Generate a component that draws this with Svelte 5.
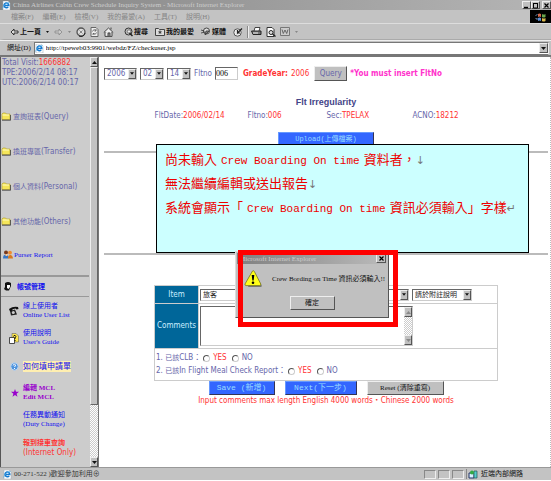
<script>
  const menus = ['檔案(F)', '編輯(E)', '檢視(V)', '我的最愛(A)', '工具(T)', '說明(H)'];
  const folders = [
    ['查詢班表', '(Query)'],
    ['換班專區', '(Transfer)'],
    ['個人資料', '(Personal)'],
    ['其他功能', '(Others)'],
  ];
  const dates = [
    { label: 'Year', value: '2006', size: 'y' },
    { label: 'Month', value: '02', size: 'm' },
    { label: 'Day', value: '14', size: 'm' },
  ];
  const info = [
    ['FltDate:', '2006/02/14'],
    ['Fltno:', '006'],
    ['Sec:', 'TPELAX'],
    ['ACNO:', '18212'],
  ];
</script>

{#snippet arrow(up = false)}
  <svg width="5" height="3" viewBox="0 0 5 3" aria-hidden="true"><path d={up ? 'M0 3L2.5 0L5 3z' : 'M0 0L2.5 3L5 0z'} fill="currentColor" /></svg>
{/snippet}

{#snippet ie(s = 9)}
  <svg width={s} height={s} viewBox="0 0 9 9" aria-hidden="true">
    <path d="M1 0h5l2 2v7H1z" fill="#fff" stroke="#9ab" stroke-width=".5" />
    <path d="M6.2 6A2.4 2.4 0 1 1 6.8 4.6H2.2" fill="none" stroke="#1479cf" stroke-width="1.5" />
    <path d="M.6 7.5Q2 2.5 7.5 1.4" fill="none" stroke="#55b0ea" stroke-width=".8" />
  </svg>
{/snippet}

<div class="app">
  <header>
    <div class="title">
      {@render ie(9)}
      <span class="grow">China Airlines Cabin Crew Schedule Inquiry System - Microsoft Internet Explorer</span>
      <button class="cap" aria-label="Minimize"><svg width="7" height="7"><path d="M1 5.5h4" stroke="#000" stroke-width="1.4" /></svg></button>
      <button class="cap" aria-label="Maximize"><svg width="7" height="7"><path d="M1 1.5h5M1.5 1v5h4V1" fill="none" stroke="#000" /></svg></button>
      <button class="cap gap" aria-label="Close"><svg width="7" height="7"><path d="M1.5 1.5l4 4m0-4l-4 4" stroke="#000" stroke-width="1.2" /></svg></button>
    </div>
    <nav class="menu">
      {#each menus as m}<button>{m}</button>{/each}
      <span class="flag">
        <svg width="12" height="10" viewBox="0 0 12 10" aria-hidden="true">
          <path d="M3 2q1.500-1 3 0v3q-1.500-1-3 0z" fill="#d66a4c" /><path d="M7 2q2 1 3.500 0v3q-2 1-3.500 0z" fill="#6aa84f" />
          <path d="M3 6q1.500-1 3 0v3q-1.500-1-3 0z" fill="#5b8fd6" /><path d="M7 6q2 1 3.500 0v3q-2 1-3.500 0z" fill="#d8b64a" />
          <path d="M1 3v1m0 2v1m1-5v1m0 3v2" stroke="#7aa5d8" stroke-width=".8" />
        </svg>
      </span>
    </nav>
    <div class="tools">
      <button class="back"><svg width="9" height="8" viewBox="0 0 9 8"><path d="M4 1L1 4l3 3V5h4V3H4z" fill="#ddd" stroke="#222" stroke-width=".9" /></svg>上一頁</button>
      <span class="drop">{@render arrow()}</span>
      <button aria-label="Forward" class="fwd"><svg width="9" height="8" viewBox="0 0 9 8"><path d="M5 1l3 3-3 3V5H1V3h4z" fill="#ccc" stroke="#888" stroke-width=".8" /></svg></button>
      <span class="drop dim">{@render arrow()}</span>
      <button aria-label="Stop"><svg width="10" height="10" viewBox="0 0 10 10"><circle cx="5" cy="5" r="4" fill="#ddd" stroke="#555" stroke-width="1.300" /><path d="M3.500 3.500l3 3m0-3l-3 3" stroke="#888" /><path d="M3 9a4 4 0 0 0 6-3" fill="none" stroke="#222" /></svg></button>
      <button aria-label="Refresh"><svg width="9" height="10" viewBox="0 0 9 10"><path d="M1 .5h5l2 2v7H1z" fill="#eee" stroke="#666" /><path d="M2.500 4.500a2 2 0 0 1 3.500-1M6.500 5.500a2 2 0 0 1-3.500 1M6 2v2H4.500M3 8V6.500h1.500" fill="none" stroke="#555" stroke-width=".8" /></svg></button>
      <button aria-label="Home"><svg width="11" height="10" viewBox="0 0 11 10"><path d="M.8 5.500L5.500 1l4.700 4.500M2 5v4.400h7V5" fill="#eee" stroke="#444" /><path d="M8 .5v2M5 9V6h2v3" stroke="#444" fill="#999" /></svg></button>
      <button class="lab find"><svg width="9" height="10" viewBox="0 0 9 10"><circle cx="4.500" cy="4.500" r="3.500" fill="#bbb" stroke="#333" /><circle cx="5" cy="4.500" r="1.700" fill="#eee" stroke="#555" stroke-width=".7" /><path d="M5.500 6l3 3" stroke="#222" stroke-width="1.500" /></svg>搜尋</button>
      <button class="lab"><svg width="10" height="9" viewBox="0 0 10 9"><path d="M.5 1.500h3l1 1h5v6h-9z" fill="#ddd" stroke="#444" /><path d="M5 3l.7 1.500h1.500L6 5.500 6.400 7 5 6.200 3.600 7 4 5.500 2.800 4.500h1.500z" fill="#444" /></svg>我的最愛</button>
      <button class="lab"><svg width="10" height="9" viewBox="0 0 10 9"><circle cx="5.500" cy="4" r="3" fill="#ddd" stroke="#444" /><path d="M0 3l3 1M0 6l4-1M4 8l4-4-3 0z" stroke="#333" stroke-width=".8" fill="#888" /></svg>媒體</button>
      <button class="lab" aria-label="History"><svg width="10" height="10" viewBox="0 0 10 10"><circle cx="4.500" cy="5.500" r="3.700" fill="#eee" stroke="#555" /><path d="M4.500 3v3L9 1.500M4.500 6H7" fill="none" stroke="#222" stroke-width="1.200" /></svg></button>
      <i class="sep"></i>
      <button aria-label="Print"><svg width="11" height="9" viewBox="0 0 11 9"><path d="M3 4l1-3.500h5L8 4" fill="#fff" stroke="#444" /><path d="M.5 4h9.500v3.500h-8z" fill="#777" stroke="#222" /><path d="M2 6h5" stroke="#eee" /></svg></button>
      <button aria-label="Preview"><svg width="10" height="10" viewBox="0 0 10 10"><path d="M1 .5h5l2 2v7H1z" fill="#fff" stroke="#333" /><circle cx="5" cy="5.500" r="2" fill="#ddd" stroke="#222" /><path d="M6.500 7l3 2.500" stroke="#222" stroke-width="1.300" /></svg></button>
      <button class="word" aria-label="Edit"><svg width="10" height="9" viewBox="0 0 10 9"><path d="M.5.5h9v8h-9z" fill="#ccc" stroke="#777" /><path d="M2 2.500l1.300 4L5 3l1.700 3.500L8 2.500" fill="none" stroke="#666" /></svg></button>
      <span class="drop dim">{@render arrow()}</span>
    </div>
    <div class="addr">
      <label for="url">網址(D)</label>
      <div class="url">{@render ie(9)}<input id="url" value="http://tpeweb03:9901/webdz/FZ/checkuser.jsp" /><button class="btn3" aria-label="History list">{@render arrow()}</button></div>
    </div>
  </header>

  <div class="body">
    <aside>
      <div class="links">
        <div class="stats">
          <div>Total Visit:<b>1666882</b></div>
          <div>TPE:2006/2/14 08:17</div>
          <div>UTC:2006/2/14 00:17</div>
        </div>
        {#each folders as [zh, en]}
          <a class="folder" href="#top"><svg width="10" height="9" viewBox="0 0 10 9"><path d="M1 2l1-1h2.500l1 1H9v5.500H1z" fill="#f5e65a" stroke="#b5a332" stroke-width=".7" /><path d="M1 8.200h8.600V3" fill="none" stroke="#333" stroke-width=".8" /><path d="M1.500 3H8" stroke="#fffbc0" /></svg><span><small>{zh}</small>{en}</span></a>
        {/each}
        <a class="purser" href="#top"><svg width="10" height="9" viewBox="0 0 10 9"><circle cx="3" cy="2.500" r="2" fill="#7a3a1c" /><circle cx="7" cy="2.700" r="1.900" fill="#f08a2c" /><path d="M0 8.500Q0 4.500 3 4.500T5.500 8.500z" fill="#3677c8" /><path d="M5 8.500Q5 5 7.300 5T10 8.500z" fill="#d8781c" /><path d="M2.500 4h2v2h-2z" fill="#ffc58c" /></svg>Purser Report</a>
        <a class="account" href="#top"><svg width="8" height="9" viewBox="0 0 8 9"><path d="M1 1q3-2 6 0v3L5 8.500H2L0 7l1-2z" fill="#111" /><path d="M3 3h3v2L4.500 7 3 6z" fill="#fff" /></svg>帳號管理</a>
        <a class="item" href="#top"><svg width="11" height="10" viewBox="0 0 11 10"><path d="M1 3q4-3 9-2l.5 2-2 .5-1-1-3 .7V5L2 5.500z" fill="#111" /><path d="M2 5l5-1.500 2 5L3 9.500z" fill="#222" /><circle cx="5.300" cy="6.500" r="1.500" fill="#ccc" /></svg><span>線上使用者<br />Online User List</span></a>
        <a class="item" href="#top"><svg width="10" height="11" viewBox="0 0 10 11"><path d="M3 .5h4l2.500 2.500v6H3z" fill="#ffe94a" stroke="#666" stroke-width=".6" /><path d="M.5 4.500h5v6h-5z" fill="#fff" stroke="#222" stroke-width=".8" /><path d="M4.500 3.500q.3-1.500 1.700-1T6 5v1M6 7v1" fill="none" stroke="#111" /></svg><span>使用說明<br />User's Guide</span></a>
        <a class="item how" href="#top"><svg width="9" height="9" viewBox="0 0 9 9"><circle cx="4.500" cy="4.500" r="3.700" fill="#4d93dd" stroke="#b9d3f0" /><path d="M3.200 3.500q.2-1.500 1.500-1.200t.5 1.700l-.7 1M4.500 6v1" fill="none" stroke="#fff" /></svg><span>如何填申請單</span></a>
        <a class="item mcl" href="#top"><svg width="8" height="8" viewBox="0 0 8 8"><path d="M4 0l1 2.800h3L5.600 4.700l.9 3L4 6 1.500 7.700l.9-3L0 2.800h3z" fill="#90c" /></svg><span>編輯 MCL<br />Edit MCL</span></a>
        <a class="item" href="#top"><span>任務異動通知<br />(Duty Change)</span></a>
        <a class="item red" href="#top"><span><b>報到接車查詢</b><br /><em>(Internet Only)</em></span></a>
      </div>
      <div class="scroll"><button class="btn3" aria-label="Up">{@render arrow(true)}</button><i class="thumb"></i><i class="track"></i><button class="btn3" aria-label="Down">{@render arrow()}</button></div>
    </aside>

    <main>
      <form class="query" onsubmit={(e) => e.preventDefault()}>
        {#each dates as d}
          <span class="sel {d.size}"><select aria-label={d.label}><option>{d.value}</option></select><i class="btn3">{@render arrow()}</i></span>
        {/each}
        <label for="flt">Fltno</label><input id="flt" value="006" />
        <strong class="r">GradeYear:</strong><span class="r yr">2006</span>
        <button class="btn3 q">Query</button><strong class="pink">*You must insert FltNo</strong>
      </form>
      <h1>Flt Irregularity</h1>
      <div class="info">{#each info as [k, v]}<span>{k}<b>{v}</b></span>{/each}</div>
      <button class="blue up">Upload(上傳檔案)</button>
      <hr />
      <div class="space"></div>
      <hr />
      <table>
        <tbody>
          <tr class="r1"><th>Item</th><td><div class="line">
            <span class="sel item1"><select aria-label="Item"><option>旅客</option></select><i class="btn3">{@render arrow()}</i></span>
            <span class="sel item2"><select aria-label="Detail"><option>請於附註說明</option></select><i class="btn3">{@render arrow()}</i></span>
          </div></td></tr>
          <tr class="r2"><th><label for="com">Comments</label></th><td><div class="ta"><textarea id="com"></textarea><div class="scroll dis"><button class="btn3" aria-label="Up">{@render arrow(true)}</button><i class="track"></i><button class="btn3" aria-label="Down">{@render arrow()}</button></div></div></td></tr>
          <tr class="r3"><td colspan="2">
            <div class="opt"><span>1. <small>已該</small>CLB：</span><label><input type="radio" name="clb" /><b>YES</b></label><label><input type="radio" name="clb" />NO</label></div>
            <div class="opt"><span>2. <small>已該</small>In Flight Meal Check Report：</span><label><input type="radio" name="meal" /><b>YES</b></label><label><input type="radio" name="meal" />NO</label></div>
          </td></tr>
        </tbody>
      </table>
      <div class="acts"><button class="blue">Save (新增)</button><button class="blue nx">Next(下一步)</button><button class="btn3 rs">Reset (清除重寫)</button></div>
      <p class="hint">Input comments max length English 4000 words・Chinese 2000 words</p>

      <div class="note">
        <p>尚未輸入<code>Crew Boarding On time</code>資料者，<s>↓</s></p>
        <p>無法繼續編輯或送出報告<s>↓</s></p>
        <p>系統會顯示「<code>Crew Boarding On time </code>資訊必須輸入」字樣<s>↵</s></p>
      </div>
      <div class="dialog" role="alertdialog" aria-label="Microsoft Internet Explorer">
        <div class="dt"><span>Microsoft Internet Explorer</span><button class="cap" aria-label="Close dialog"><svg width="7" height="7"><path d="M1.500 1.500l4 4m0-4l-4 4" stroke="#000" stroke-width="1.200" /></svg></button></div>
        <div class="dm"><svg width="19" height="18" viewBox="0 0 19 18"><path d="M10 3l8 13-1 1H4z" fill="#777" /><path d="M8.500 1q1-.8 1.800.4L16.800 14q.3 1.500-1 1.600H2Q.6 15.300 1 14z" fill="#ffff19" stroke="#77761c" stroke-width=".8" /><path d="M7.700 5h2.600l-.7 5.500H8.400z" fill="#000" /><circle cx="9" cy="12.700" r="1.300" /></svg><span>Crew Bording on Time 資訊必須輸入!!</span></div>
        <button class="btn3 ok">確定</button>
      </div>
      <div class="frame"></div>
    </main>
  </div>

  <footer>
    {@render ie(9)}<span class="grow">00-271-522 )歡迎參加利用⊕</span><i></i><i></i><i></i>
    <span class="zone"><svg width="10" height="9" viewBox="0 0 10 9"><path d="M1 3h5v5H1z" fill="#d9f1ff" stroke="#236" /><path d="M6 1h3v7H6z" fill="#5cc" stroke="#255" stroke-width=".7" /><circle cx="4" cy="2.500" r="2" fill="#3a4" /></svg>近端內部網路</span>
  </footer>
</div>

<style>
  :global(body) { margin: 0; background: #fff; }
  .app { --ui: "DejaVu Sans Condensed", "Noto Sans", "Noto Sans CJK TC", sans-serif; --serif: "Liberation Serif", "Noto Sans CJK TC", serif;
    min-height: 100vh; box-sizing: border-box; padding-bottom: 1px; display: flex; flex-direction: column; font: 8px/10px var(--ui); color: #66a; overflow: hidden; }
  button, input, select, textarea { font: inherit; color: inherit; margin: 0; padding: 0; border: 0; background: none; border-radius: 0; appearance: none; outline: 0; box-sizing: border-box; white-space: nowrap; }
  svg { display: block; flex: none; }
  i, em { font-style: normal; }
  a { text-decoration: none; color: inherit; }
  .grow { flex: 1; }
  .btn3, .cap { background: #c0c0c0; border: 1px solid; border-color: #eee #555 #555 #eee; display: flex; align-items: center; justify-content: center; color: #111; box-sizing: border-box; }
  header { background: #c3c3c3; border-bottom: 2px solid #777; }
  .title { height: 10px; display: flex; align-items: center; gap: 2px; padding-left: 2px; background: linear-gradient(90deg, #858585, #b5b5b5); color: #ccc; font: 7px/9px var(--serif); white-space: nowrap; }
  .cap { width: 9px; height: 8px; flex: none; margin-left: -2px; }
  .cap.gap { margin: 0; }
  .menu { height: 14px; display: flex; align-items: center; gap: 9px; padding-left: 11px; color: #858585; font: 7px/12px var(--serif); border-bottom: 1px solid #ddd; box-sizing: border-box; }
  .flag { margin-left: auto; width: 21px; height: 13px; background: #000; display: flex; align-items: center; justify-content: center; }
  .tools { height: 16px; display: flex; align-items: center; gap: 4px; padding-left: 6px; border-left: 4px solid #c3c3c3; box-sizing: border-box; color: #111; border-bottom: 1px solid #aaa; font: 7px/12px var(--serif); font-weight: bold; }
  .tools button { display: flex; align-items: center; gap: 1px; }
  .drop svg { width: 3px; height: 2px; margin: 0 1px; }
  .dim { color: #888; }
  .tools .find { margin-left: 6px; }
  .tools .lab { margin-right: 3px; }
  .sep { width: 1px; height: 12px; background: #888; border-right: 1px solid #eee; margin: 0 -2px 0 -3px; }
  .addr { height: 15px; display: flex; align-items: center; gap: 3px; padding: 0 2px 0 7px; color: #111; font: 7px/12px var(--serif); border-top: 1px solid #eee; box-sizing: border-box; }
  .url { flex: 1; display: flex; align-items: center; gap: 2px; height: 13px; background: #fff; border: 1px solid #777; border-right-color: #eee; box-sizing: border-box; }
  .url input { flex: 1; color: #000; }
  .url .btn3 { width: 9px; height: 10px; }

  .body { flex: 1; display: flex; }
  aside { width: 99px; flex: none; display: flex; background: #ccc; border-left: 1px solid #555; border-right: 1px solid #777; box-sizing: border-box; }
  .links { flex: 1; min-width: 0; white-space: nowrap; color: #11e; }
  .stats { height: 42px; box-sizing: border-box; padding: 1px 0 0 1px; color: #66a; font-size: 8px; }
  .stats b, .info b, .opt b { font-weight: normal; color: #f33; }
  small { font-size: 7px; }
  .folder { display: flex; align-items: center; gap: 2px; height: 35px; color: #66a; }
  .purser { display: flex; align-items: center; gap: 1px; height: 36px; box-sizing: border-box; padding: 0 0 5px 2px; font: 7px/10px var(--serif); }
  .account { display: flex; align-items: center; gap: 5px; height: 19px; margin-right: 1px; padding-left: 3px; border: solid #999; border-width: 2px 0 1px; font: bold 7px/10px var(--serif); }
  .item { display: grid; grid-template-columns: 18px 1fr; gap: 4px; align-items: center; height: 27px; font: 7px/9px var(--serif); }
  .item svg { justify-self: end; }
  .item span { grid-column: 2; }
  .item + .item { height: 28px; }
  .item.how { height: 28px; }
  .how span { background: #ffefb0; justify-self: start; font: 8px/11px var(--ui); }
  .item.mcl { color: #90c; font-weight: bold; height: 26px; }
  .red { color: #f33; }
  .red em { font: 8px/9px var(--ui); }
  .scroll { width: 8px; flex: none; display: flex; flex-direction: column; }
  .scroll .btn3 { height: 10px; flex: none; }
  .thumb { flex: 335 0 0; background: #c3c3c3; border: 1px solid; border-color: #eee #666 #666 #eee; }
  .track { flex: 52 0 0; background: repeating-conic-gradient(#fff 0 25%, #ccc 0 50%) 0 0 / 2px 2px; }

  main { flex: 1; min-width: 0; position: relative; padding: 7px 2px 0 5px; background: #fff; border-right: 1px dotted #bbb; }
  .query { display: flex; align-items: center; height: 19px; gap: 3px; white-space: nowrap; }
  .sel { display: flex; height: 12px; border: 1px solid; border-color: #666 #ccc #ccc #666; background: #fff; box-sizing: border-box; }
  .sel select { flex: 1; min-width: 0; padding-left: 2px; }
  .sel .btn3 { width: 8px; flex: none; }
  .sel .btn3 svg { width: 4px; }
  .y { width: 33px; } .m { width: 24px; }
  .query input { width: 23px; height: 13px; border: 1px solid; border-color: #666 #ccc #ccc #666; font: 8px/10px var(--serif); color: #000; margin-right: 2px; }
  .r { color: #f33; } .query .yr { margin-right: 2px; }
  .q { width: 33px; height: 15px; color: #66a; }
  .pink { color: #f3c; }
  h1 { margin: 13px 0 0; text-align: center; font: bold 9px/12px "Liberation Sans", sans-serif; color: #448; }
  .info { width: 343px; margin: 3px auto 0; display: grid; grid-template-columns: 93fr 79fr 86fr 85fr; }
  .blue { display: block; background: #36f; color: #9df; border: 1px solid; border-color: #69f #335 #335 #69f; height: 14px; width: 66px; font: 8px/10px "Liberation Mono", "Noto Sans CJK TC", monospace; }
  .up { margin: 11px auto 0; width: 96px; font-size: 7px; }
  hr { border: 0; border-top: 2px solid #bbb; margin: 5px 0 0; }
  .space { height: 95px; }
  table { width: 344px; margin: 30px auto 0; border-collapse: collapse; }
  th, td { border: 1px solid #ccc; padding: 1px; }
  th { width: 41px; background: #069; color: #cef; font-weight: normal; }
  .r1 { height: 18px; } .r2 { height: 45px; } .r3 { height: 32px; }
  .line { display: flex; gap: 3px; color: #222; font: 7px/10px var(--serif); }
  .item1 { width: 209px; } .item2 { width: 60px; }
  .ta { display: flex; width: 213px; height: 40px; border: 1px solid; border-color: #666 #ccc #ccc #666; box-sizing: border-box; }
  .ta textarea { flex: 1; min-width: 0; resize: none; }
  .dis .btn3 { color: #888; }
  .opt { display: flex; align-items: center; height: 13px; gap: 5px; }
  .opt span { margin-right: -3px; }
  .opt label { display: flex; align-items: center; gap: 3px; }
  .opt input { width: 7px; height: 7px; border: 1px solid; border-color: #555 #ccc #ccc #555; border-radius: 50%; }
  .acts { display: flex; justify-content: center; gap: 10px; }
  .nx { width: 72px; }
  .rs { width: 77px; font: 7px/10px var(--serif); }
  .hint { margin: 1px 0 0; text-align: center; color: #f33; white-space: nowrap; }
  .note { position: absolute; left: 57px; top: 87px; width: 373px; height: 109px; box-sizing: border-box; border: 1px solid #000; background: #cff; padding: 4px 8px; color: #e00; font: 13px/24px "Liberation Mono", "Noto Sans CJK TC", monospace; white-space: nowrap; }
  .note p { margin: 0; height: 24px; }
  .note code { font: 11px/20px "Liberation Mono", monospace; white-space: pre; margin: 0 4px; }
  .note s { text-decoration: none; color: #777; font: 11px/20px "DejaVu Sans", sans-serif; }
  .dialog { position: absolute; left: 136px; top: 194px; width: 154px; height: 67px; box-sizing: border-box; background: #c0c0c0; border: 1px solid; border-color: #ddd #555 #555 #ddd; padding: 1px; color: #111; font: 7px/10px var(--serif); }
  .dt { display: flex; align-items: center; justify-content: space-between; height: 11px; background: linear-gradient(90deg, #808080, #bbb); color: #ccc; padding-left: 2px; }
  .dt .cap { width: 10px; height: 9px; margin: 0 1px 0 0; }
  .dm { display: flex; align-items: center; gap: 9px; padding: 6px 0 0 7px; white-space: nowrap; }
  .ok { width: 45px; height: 14px; margin: 8px auto 0; }
  .frame { position: absolute; left: 139px; top: 193px; width: 160px; height: 77px; border: 5px solid #f00; box-sizing: border-box; pointer-events: none; }

  footer { height: 13px; display: flex; align-items: center; gap: 2px; padding-left: 3px; background: #c3c3c3; border-top: 1px solid #999; color: #333; box-sizing: border-box; font: 7px/10px var(--serif); white-space: nowrap; }
  footer i { width: 12px; height: 9px; border: 1px solid; border-color: #888 #eee #eee #888; box-sizing: border-box; }
  .zone { display: flex; align-items: center; gap: 3px; width: 83px; border-left: 1px solid #888; padding-left: 1px; color: #111; }
</style>
